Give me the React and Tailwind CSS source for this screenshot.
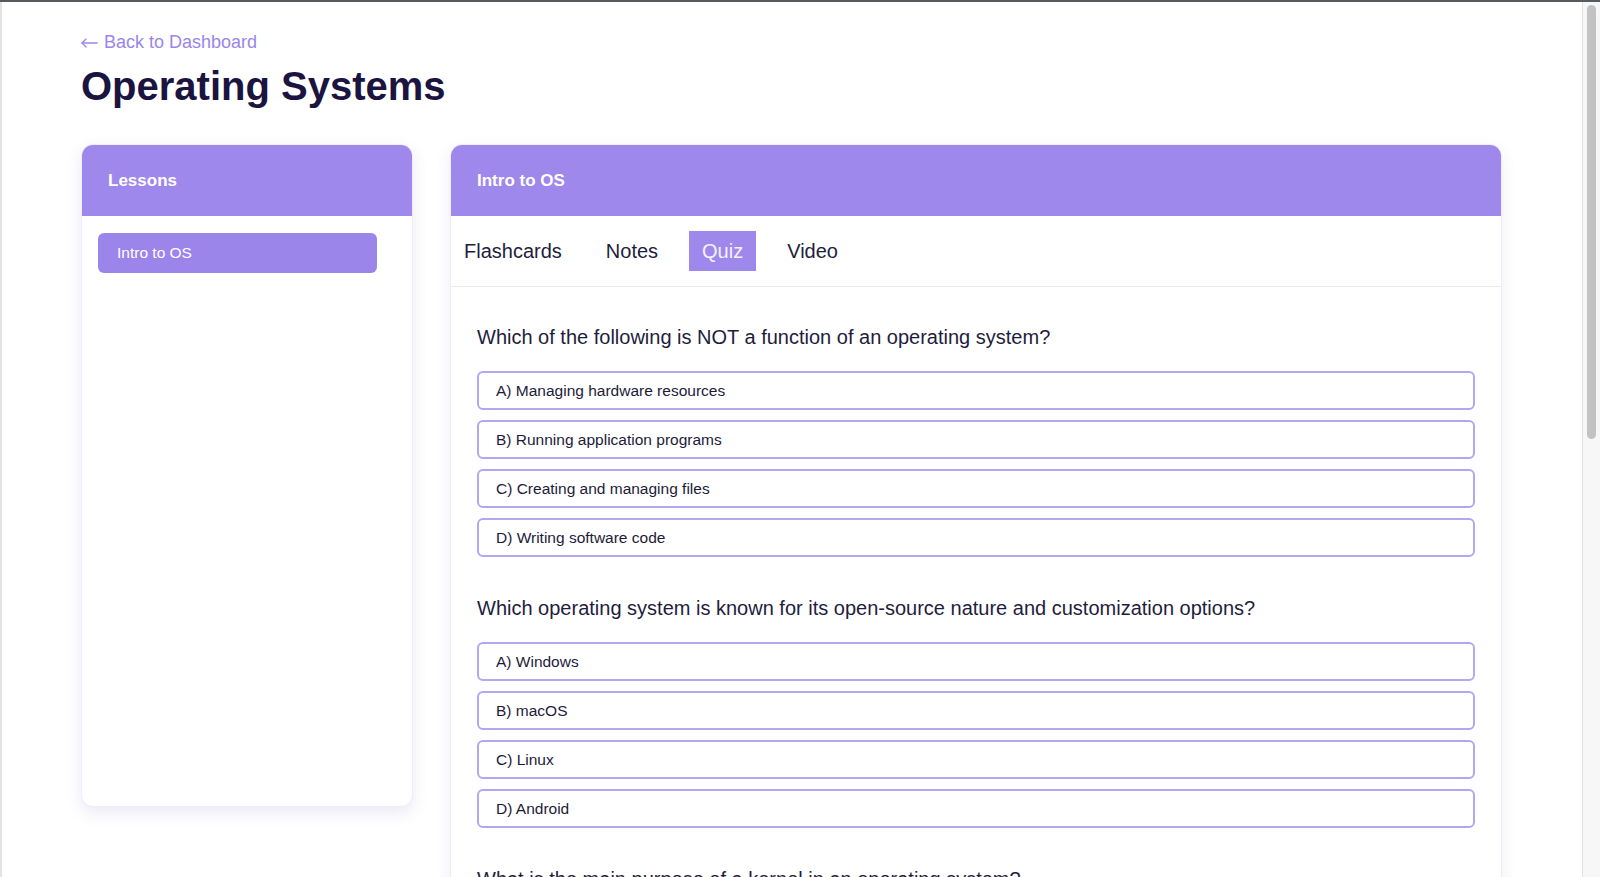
import React from "react";

const questions = [
  {
    q: "Which of the following is NOT a function of an operating system?",
    options: [
      "A) Managing hardware resources",
      "B) Running application programs",
      "C) Creating and managing files",
      "D) Writing software code",
    ],
  },
  {
    q: "Which operating system is known for its open-source nature and customization options?",
    options: ["A) Windows", "B) macOS", "C) Linux", "D) Android"],
  },
  {
    q: "What is the main purpose of a kernel in an operating system?",
    options: [
      "A) Managing user interface",
      "B) Managing system resources",
      "C) Running applications",
      "D) Storing files",
    ],
  },
];

const tabs = ["Flashcards", "Notes", "Quiz", "Video"];

export default function App() {
  return (
    <div
      className="h-[877px] w-[1600px] flex overflow-hidden bg-white border-t-2 border-[#575b5f]"
      style={{ fontFamily: '"Liberation Sans", Arial, Helvetica, sans-serif' }}
    >
      <div className="w-[2px] shrink-0 bg-[#e2e2e2]" />
      <main className="flex-1 min-w-0 overflow-hidden pl-[79px] pr-[80px] pt-[26px]">
        <a className="flex items-center h-[28px] text-[18px] leading-[28px] text-[#9a86e8]">
          <svg
            width="17"
            height="10"
            viewBox="0 0 17 10"
            fill="none"
            stroke="#9a86e8"
            strokeWidth="1.3"
            strokeLinecap="round"
            strokeLinejoin="round"
            className="mr-[6px] mt-[1px]"
          >
            <path d="M16.3 5H1" />
            <path d="M5 1L1 5L5 9" />
          </svg>
          <span>Back to Dashboard</span>
        </a>
        <h1 className="mt-[6px] text-[40px] leading-[48px] font-bold text-[#1b1440]">
          Operating Systems
        </h1>
        <div className="mt-[34px] flex items-start gap-[37px]">
          <aside className="w-[332px] h-[663px] shrink-0 rounded-xl bg-white border border-[#efedf8] shadow-[0_6px_16px_rgba(90,70,170,0.12)] overflow-hidden">
            <div className="h-[71px] flex items-center px-[26px] bg-[#9f88ec] text-white font-bold text-[17px]">
              Lessons
            </div>
            <div className="px-[16px] pt-[17px]">
              <div className="w-[279px] h-[40px] flex items-center px-[19px] rounded-md bg-[#9b84ea] text-white text-[15.5px]">
                Intro to OS
              </div>
            </div>
          </aside>
          <section className="flex-1 min-w-0 rounded-xl bg-white border border-[#efedf8] shadow-[0_6px_16px_rgba(90,70,170,0.10)] overflow-hidden">
            <div className="h-[71px] flex items-center px-[26px] bg-[#9f88ec] text-white font-bold text-[17px]">
              Intro to OS
            </div>
            <div className="flex items-center gap-[18px] py-[15px] border-b border-[#ecebf5]">
              {tabs.map((t) => (
                <button
                  key={t}
                  className={
                    t === "Quiz"
                      ? "h-[40px] px-[13px] text-[20px] bg-[#9f88ec] text-[#f4f1ff]"
                      : "h-[40px] px-[13px] text-[20px] text-[#1f1d3d]"
                  }
                >
                  {t}
                </button>
              ))}
            </div>
            <div className="px-[26px] pt-[36px] flex flex-col gap-[37px]">
              {questions.map((qq) => (
                <div key={qq.q}>
                  <p className="text-[20px] leading-[28px] text-[#1f1d3d]">{qq.q}</p>
                  <div className="mt-[20px] flex flex-col gap-[10px]">
                    {qq.options.map((o) => (
                      <div
                        key={o}
                        className="h-[39px] flex items-center px-[17px] rounded-md border-2 border-[#b3a7ef] text-[15.5px] text-[#1d1b3a]"
                      >
                        {o}
                      </div>
                    ))}
                  </div>
                </div>
              ))}
            </div>
          </section>
        </div>
      </main>
      <div className="w-[18px] shrink-0 border-l border-[#e3e3e3] bg-[#f7f7f7] pt-[3px] pl-[4px]">
        <div className="w-[9px] h-[434px] rounded-full bg-[#c2c2c2]" />
      </div>
    </div>
  );
}
